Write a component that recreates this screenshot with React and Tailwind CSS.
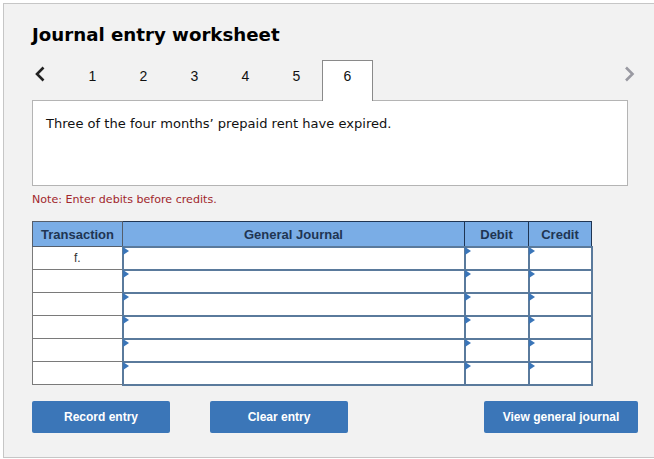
import React from "react";

const tabs = [1, 2, 3, 4, 5];
const rows = ["f.", "", "", "", "", ""];

const Chevron = ({ points, color }) => (
  <svg width="12" height="16" viewBox="0 0 12 16" fill="none">
    <polyline points={points} stroke={color} strokeWidth="2.6" />
  </svg>
);

const InputCell = ({ className }) => (
  <td className={`relative h-[23px] border-2 border-[#5a7a9c] bg-white p-0 ${className}`}>
    <span className="absolute left-[-1px] top-[-1px] h-0 w-0 border-y-[4px] border-l-[6px] border-y-transparent border-l-[#3a75b8]" />
  </td>
);

const ActionButton = ({ children, className }) => (
  <button className={`h-[32px] rounded-[2px] bg-[#3b76b8] text-center text-[12px] font-bold text-white ${className}`}>
    {children}
  </button>
);

export default function App() {
  return (
    <div className="h-[459px] w-[654px] overflow-hidden bg-white pl-[3px] pt-[3px]">
      <div className="h-[455px] w-[660px] border border-[#c6c6c6] bg-[#f2f2f2] pl-[28px] pt-[19px]">
        <h1 className="h-[37px] font-['DejaVu_Sans'] text-[18.2px] leading-[24px] font-bold text-black">
          Journal entry worksheet
        </h1>
        <div className="flex h-[41px] w-[596px] items-start font-['Liberation_Sans'] text-[14px] text-[#111]">
          <div className="flex h-[40px] w-[35px] items-start pl-[2px] pt-[6px]">
            <Chevron points="9.5,1.5 3,8 9.5,14.5" color="#222" />
          </div>
          {tabs.map((tab) => (
            <div key={tab} className="flex h-[32px] w-[51px] items-center justify-center">
              {tab}
            </div>
          ))}
          <div className="z-10 flex h-[41px] w-[51px] items-start justify-center border border-b-0 border-[#8a8a8a] bg-white pt-[5px]">
            6
          </div>
          <div className="ml-auto pt-[6px]">
            <div className="translate-x-[7px]">
              <Chevron points="3,1.5 9.5,8 3,14.5" color="#9a9aa2" />
            </div>
          </div>
        </div>
        <div className="mt-[-1px] h-[86px] w-[596px] border border-[#b4b4b4] bg-white px-[13px] pt-[14px] font-['DejaVu_Sans'] text-[13.07px] leading-[18px] text-[#111]">
          Three of the four months’ prepaid rent have expired.
        </div>
        <p className="mt-[7px] h-[28px] font-['DejaVu_Sans'] text-[11.1px] leading-[14px] text-[#a1262c]">
          Note: Enter debits before credits.
        </p>
        <table className="w-[559px] table-fixed border-collapse font-['Liberation_Sans'] text-[12px] text-[#333]">
          <colgroup>
            <col className="w-[90px]" />
            <col className="w-[342px]" />
            <col className="w-[64px]" />
            <col className="w-[63px]" />
          </colgroup>
          <thead>
            <tr className="h-[25px] bg-[#7aade6] text-[#1f3553]">
              <th className="border border-[#555e6b] p-0 pt-[1px] text-[13px] font-semibold">Transaction</th>
              <th className="border border-[#1f3553] p-0 pt-[1px] text-[13px] font-semibold">General Journal</th>
              <th className="border border-[#1f3553] p-0 pt-[1px] text-[13px] font-semibold">Debit</th>
              <th className="border border-[#1f3553] p-0 pt-[1px] text-[13px] font-semibold">Credit</th>
            </tr>
          </thead>
          <tbody>
            {rows.map((label, i) => (
              <tr key={i} className="h-[23px]">
                <td className="border border-[#7a7a7a] bg-white p-0 text-center align-middle text-[12px]">{label}</td>
                <InputCell />
                <InputCell />
                <InputCell />
              </tr>
            ))}
          </tbody>
        </table>
        <div className="mt-[15px] flex w-[606px] font-['Liberation_Sans']">
          <ActionButton className="w-[138px]">Record entry</ActionButton>
          <ActionButton className="ml-[40px] w-[138px]">Clear entry</ActionButton>
          <ActionButton className="ml-auto w-[154px]">View general journal</ActionButton>
        </div>
      </div>
    </div>
  );
}
